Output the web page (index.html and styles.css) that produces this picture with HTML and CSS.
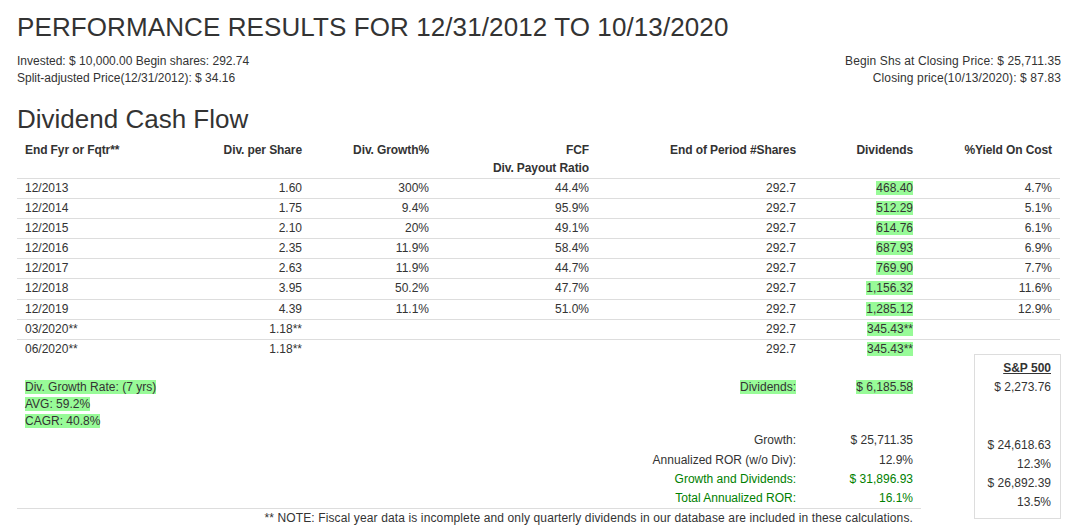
FILE: index.html
```html
<!DOCTYPE html>
<html lang="en">
<head>
<meta charset="utf-8">
<title>Performance Results</title>
<link rel="stylesheet" href="styles.css">
</head>
<body>
<div class="page">
  <h1 class="title">PERFORMANCE RESULTS FOR 12/31/2012 TO 10/13/2020</h1>
  <div class="info">
    <div class="info-left">Invested: $ 10,000.00 Begin shares: 292.74<br>Split-adjusted Price(12/31/2012): $ 34.16</div>
    <div class="info-right">Begin Shs at Closing Price: $ 25,711.35<br>Closing price(10/13/2020): $ 87.83</div>
  </div>
  <h2 class="section-title">Dividend Cash Flow</h2>
  <table class="cf">
    <colgroup>
      <col class="c1"><col class="c2"><col class="c3"><col class="c4"><col class="c5"><col class="c6"><col class="c7">
    </colgroup>
    <thead>
      <tr>
        <th class="l">End Fyr or Fqtr**</th>
        <th>Div. per Share</th>
        <th>Div. Growth%</th>
        <th>FCF<br>Div. Payout Ratio</th>
        <th>End of Period #Shares</th>
        <th>Dividends</th>
        <th>%Yield On Cost</th>
      </tr>
    </thead>
    <tbody>
      <tr><td class="l">12/2013</td><td>1.60</td><td>300%</td><td>44.4%</td><td>292.7</td><td><span class="hl">468.40</span></td><td>4.7%</td></tr>
      <tr><td class="l">12/2014</td><td>1.75</td><td>9.4%</td><td>95.9%</td><td>292.7</td><td><span class="hl">512.29</span></td><td>5.1%</td></tr>
      <tr><td class="l">12/2015</td><td>2.10</td><td>20%</td><td>49.1%</td><td>292.7</td><td><span class="hl">614.76</span></td><td>6.1%</td></tr>
      <tr><td class="l">12/2016</td><td>2.35</td><td>11.9%</td><td>58.4%</td><td>292.7</td><td><span class="hl">687.93</span></td><td>6.9%</td></tr>
      <tr><td class="l">12/2017</td><td>2.63</td><td>11.9%</td><td>44.7%</td><td>292.7</td><td><span class="hl">769.90</span></td><td>7.7%</td></tr>
      <tr><td class="l">12/2018</td><td>3.95</td><td>50.2%</td><td>47.7%</td><td>292.7</td><td><span class="hl">1,156.32</span></td><td>11.6%</td></tr>
      <tr><td class="l">12/2019</td><td>4.39</td><td>11.1%</td><td>51.0%</td><td>292.7</td><td><span class="hl">1,285.12</span></td><td>12.9%</td></tr>
      <tr><td class="l">03/2020**</td><td>1.18**</td><td></td><td></td><td>292.7</td><td><span class="hl">345.43**</span></td><td></td></tr>
      <tr><td class="l">06/2020**</td><td>1.18**</td><td></td><td></td><td>292.7</td><td><span class="hl">345.43**</span></td><td></td></tr>
    </tbody>
  </table>
  <div class="summary">
    <div class="summary-main">
      <table class="sum">
        <colgroup><col class="s1"><col class="s2"><col class="s3"></colgroup>
        <tbody>
          <tr>
            <td class="l">
              <div><span class="hl">Div. Growth Rate: (7 yrs)</span></div>
              <div><span class="hl">AVG: 59.2%</span></div>
              <div><span class="hl">CAGR: 40.8%</span></div>
            </td>
            <td><span class="hl">Dividends:</span></td>
            <td><span class="hl">$ 6,185.58</span></td>
          </tr>
          <tr><td></td><td>Growth:</td><td>$ 25,711.35</td></tr>
          <tr><td></td><td>Annualized ROR (w/o Div):</td><td>12.9%</td></tr>
          <tr class="green"><td></td><td>Growth and Dividends:</td><td>$ 31,896.93</td></tr>
          <tr class="green"><td></td><td>Total Annualized ROR:</td><td>16.1%</td></tr>
          <tr class="note"><td colspan="3">** NOTE: Fiscal year data is incomplete and only quarterly dividends in our database are included in these calculations.</td></tr>
        </tbody>
      </table>
    </div>
    <div class="sp-box">
      <table class="sp">
        <tbody>
          <tr><td class="sp-head">S&amp;P 500</td></tr>
          <tr><td>$ 2,273.76</td></tr>
          <tr><td>&nbsp;</td></tr>
          <tr><td>&nbsp;</td></tr>
          <tr><td>$ 24,618.63</td></tr>
          <tr><td>12.3%</td></tr>
          <tr><td>$ 26,892.39</td></tr>
          <tr><td>13.5%</td></tr>
        </tbody>
      </table>
    </div>
  </div>
</div>
</body>
</html>
```

FILE: styles.css
```css
* { box-sizing: border-box; }

body {
  margin: 0;
  font-family: "Liberation Sans", Arial, Helvetica, sans-serif;
  font-size: 12px;
  line-height: 1.42857;
  color: #333;
  background: #fff;
}

.page {
  padding: 13px 9px 0 17px;
}

.title {
  font-size: 26px;
  font-weight: normal;
  line-height: 1.1;
  letter-spacing: 0.1px;
  margin: 0 0 11px;
}

.info {
  display: flex;
  justify-content: space-between;
}

.info-right {
  text-align: right;
  letter-spacing: 0.12px;
}

.section-title {
  font-size: 26px;
  font-weight: normal;
  line-height: 1.1;
  margin: 18px 0 8px;
}

table {
  border-collapse: collapse;
  border-spacing: 0;
}

.cf {
  width: 1043px;
  table-layout: fixed;
}

.cf .c1 { width: 183px; }
.cf .c2 { width: 110px; }
.cf .c3 { width: 127px; }
.cf .c4 { width: 160px; }
.cf .c5 { width: 207px; }
.cf .c6 { width: 117px; }
.cf .c7 { width: 139px; }

.cf th,
.cf td {
  padding: 1px 8px;
  text-align: right;
  vertical-align: top;
  white-space: nowrap;
}

.cf th {
  font-weight: bold;
  letter-spacing: -0.1px;
}

.cf td {
  border-top: 1px solid #ddd;
}

.cf .l,
.sum .l {
  text-align: left;
}

.hl {
  background: #98fb98;
}

.summary {
  display: flex;
  align-items: flex-start;
  margin-top: -5px;
}

.summary-main {
  width: 904px;
  padding-top: 24px;
}

.sum {
  width: 904px;
  table-layout: fixed;
}

.sum .s1 { width: 580px; }
.sum .s2 { width: 207px; }
.sum .s3 { width: 117px; }

.sum td {
  padding: 1px 8px;
  text-align: right;
  vertical-align: top;
  white-space: nowrap;
}

.sum .green td {
  color: #008000;
}

.sum .note td {
  border-top: 1px solid #ddd;
  letter-spacing: 0.13px;
}

.sp-box {
  margin-left: 53px;
  width: 88px;
  border: 1px solid #ddd;
  padding: 4px 0 6px;
}

.sp {
  width: 100%;
}

.sp td {
  padding: 1px 9px 1px 0;
  text-align: right;
  white-space: nowrap;
}

.sp .sp-head {
  font-weight: bold;
  text-decoration: underline;
}
```
